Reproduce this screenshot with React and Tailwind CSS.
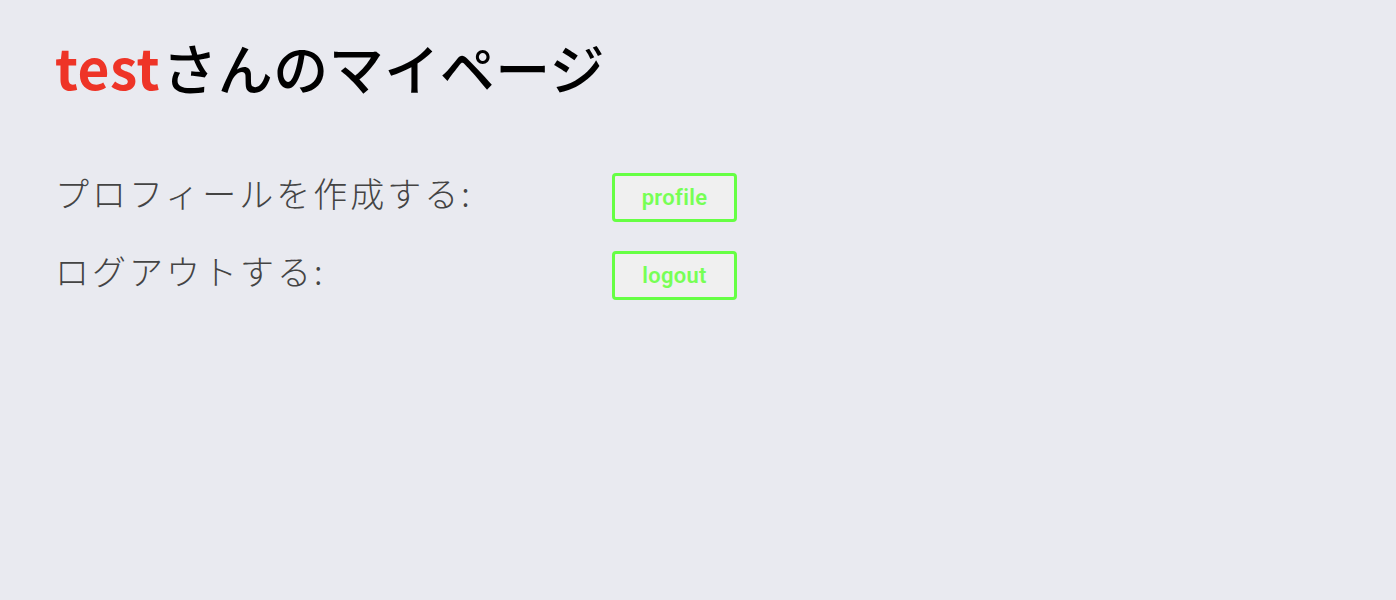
export default function App() {
  const rows = [
    { label: 'プロフィールを作成する:', btn: 'profile' },
    { label: 'ログアウトする:', btn: 'logout' },
  ];

  return (
    <div className="min-h-screen bg-[#e9eaf0] px-[55px] pt-[26px]" style={{ fontFamily: '"Noto Sans CJK JP", sans-serif' }}>
      <h1 className="flex items-baseline text-[55px] font-medium leading-[80px] text-black">
        <span className="font-semibold tracking-[0.5px] text-[#ee3427]">test</span>
        <span className="ml-[2px] tracking-[0.5px]">さんのマイページ</span>
      </h1>
      <div className="mt-[67px] flex flex-col gap-[29px]">
        {rows.map((r) => (
          <div key={r.btn} className="flex items-center">
            <div className="w-[557px] text-[34px] font-light leading-[40px] tracking-[3px] text-[#444] -mt-[10px]">
              {r.label}
            </div>
            <button
              className="h-[49px] w-[125px] rounded-[4px] border-[3px] border-[#66ff44] bg-[#f0f0f0] text-[22px] font-semibold tracking-[0.3px] text-[#77ff55]"
              style={{ fontFamily: 'Roboto, "Liberation Sans", sans-serif' }}
            >
              {r.btn}
            </button>
          </div>
        ))}
      </div>
    </div>
  );
}
